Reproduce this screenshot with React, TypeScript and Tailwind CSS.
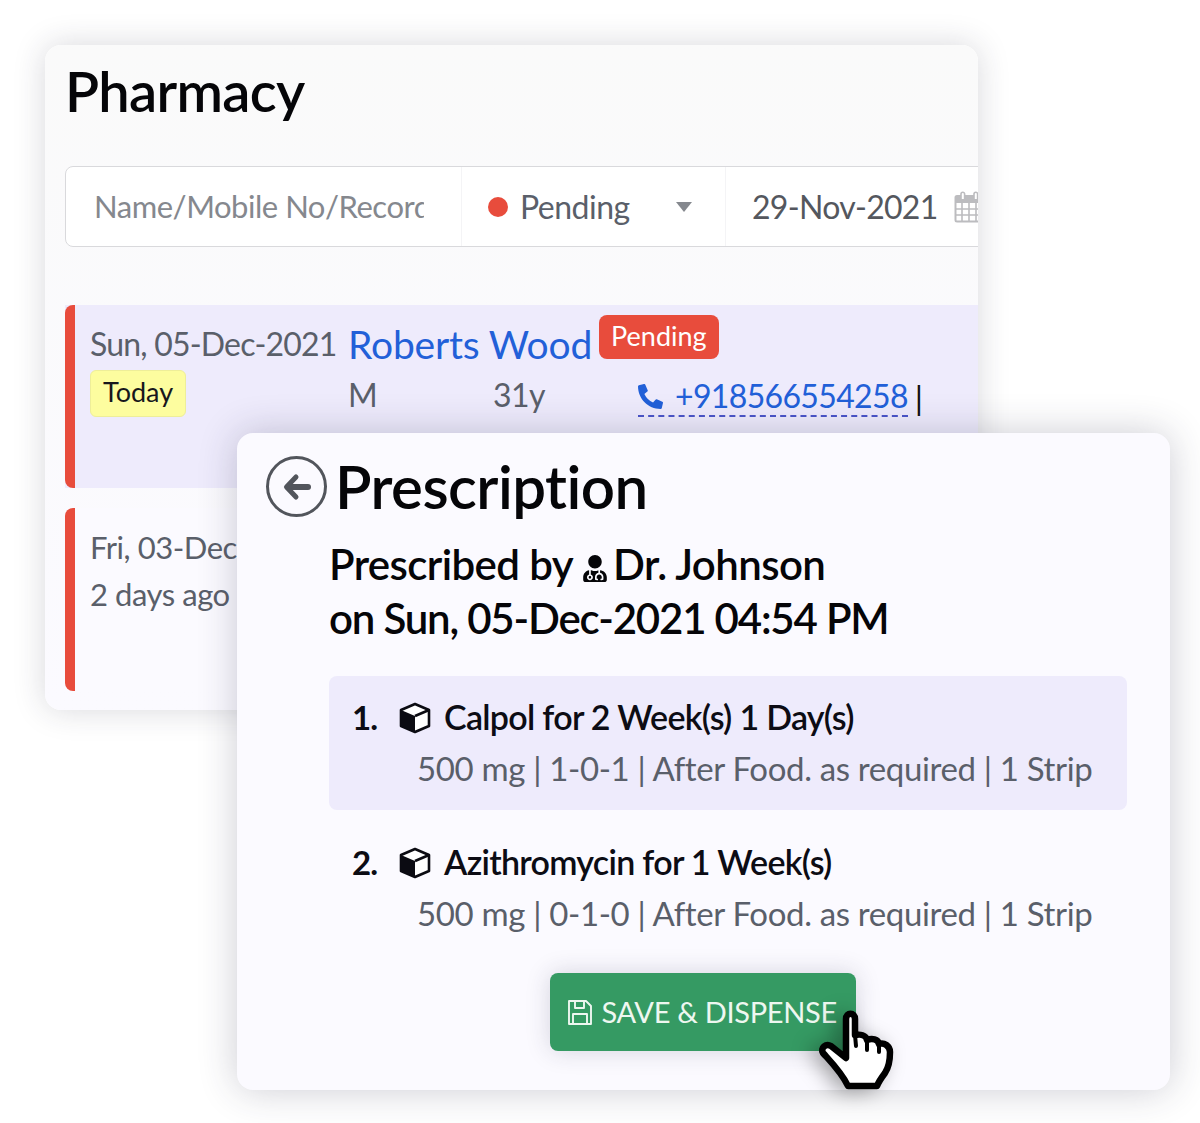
import React from "react";
import { FaPhoneAlt, FaUserMd } from "react-icons/fa";

function Cube() {
  return (
    <svg viewBox="0 0 32 32" className="w-[32px] h-[32px] shrink-0">
      <path d="M16 2 L30 8 V24 L16 30 L2 24 V8 Z" fill="#fff" stroke="#0b0b12" strokeWidth="2.6" strokeLinejoin="round" />
      <path d="M2 8 L16 14 V30 L2 24 Z" fill="#0b0b12" />
      <path d="M16 14 L30 8" stroke="#0b0b12" strokeWidth="2.6" />
    </svg>
  );
}

function Hand() {
  return (
    <svg viewBox="0 0 90 92" className="absolute left-[810px] top-[1005px] w-[90px] h-[92px] drop-shadow-[-8px_2px_10px_rgba(0,0,0,0.35)]">
      <path
        d="M36 14 C36 7 45 7 45 14 L45 30 C50 29 56 30 57 35 C62 33 68 34 69 39 C74 37 80 41 80 47 C80 55 79 62 75 68 C72 72 69 76 67 81 L38 81 C32 68 22 58 13 48 C10 43 16 38 21 41 L36 53 Z"
        fill="#fff"
        stroke="#000"
        strokeWidth="6.5"
        strokeLinejoin="round"
      />
      <path d="M45 30 L46 41 M57 35 L57 45 M69 39 L69 47" stroke="#000" strokeWidth="4" strokeLinecap="round" fill="none" />
    </svg>
  );
}

function Calendar() {
  return (
    <svg viewBox="0 0 30 32" className="ml-[16px] w-[30px] h-[32px] shrink-0">
      <rect x="1.5" y="5" width="27" height="25.5" rx="1.5" fill="#fff" stroke="#bcbcbf" strokeWidth="2" />
      <rect x="1" y="5" width="28" height="7" fill="#bcbcbf" />
      <path d="M8 12 V30 M15 12 V30 M22 12 V30 M2 18 H28 M2 24 H28" stroke="#bcbcbf" strokeWidth="1.6" />
      <path d="M7 8 V3 A1.8 1.8 0 0 1 10.6 3 V8 M20 8 V3 A1.8 1.8 0 0 1 23.6 3 V8" stroke="#bcbcbf" strokeWidth="1.6" fill="#fff" />
    </svg>
  );
}

function BackArrow() {
  return (
    <svg viewBox="0 0 28 28" className="w-[28px] h-[28px]">
      <path d="M25 14 H6" stroke="#52555c" strokeWidth="6" strokeLinecap="round" />
      <path d="M13 4 L3.5 14 L13 24" stroke="#52555c" strokeWidth="5" strokeLinecap="round" strokeLinejoin="round" fill="none" />
    </svg>
  );
}

function SaveIcon() {
  return (
    <svg viewBox="0 0 24 25" className="w-[24px] h-[25px] mr-[10px] shrink-0" fill="none" stroke="#eef7f0" strokeWidth="1.9" strokeLinejoin="round">
      <path d="M1 1 H18 L23 6 V24 H1 Z" />
      <path d="M7 1 V8 H16 V1" />
      <path d="M5 24 V14 H19 V24" />
    </svg>
  );
}

function Item({ n, name, sub, active }: { n: string; name: string; sub: string; active?: boolean }) {
  return (
    <div className={"h-[134px] rounded-lg pl-[23px] pt-[19px] " + (active ? "bg-[#eeebfc]" : "")}>
      <div className="flex items-center h-[42px]">
        <span className="w-[47px] pt-[4px] text-[33px] font-bold text-[#0c0c14] tracking-[-1px]">{n}</span>
        <span className="pt-[3px]">
          <Cube />
        </span>
        <span className="ml-[13px] text-[34px] font-semibold text-[#0c0c14] tracking-[-0.7px] whitespace-nowrap">{name}</span>
      </div>
      <div className="ml-[65px] mt-[10px] text-[33px] leading-[42px] text-[#5a5f6a] tracking-[-0.35px] whitespace-nowrap">{sub}</div>
    </div>
  );
}

function Row({ active, children }: { active?: boolean; children: React.ReactNode }) {
  return (
    <div className={"flex h-[183px] " + (active ? "bg-[#eeebfc]" : "bg-[#fbfaff]")}>
      <div className="w-[10px] shrink-0 bg-[#e84c3c] rounded-l-lg" />
      <div className="flex-1 min-w-0">{children}</div>
    </div>
  );
}

export default function App() {
  return (
    <div className="relative h-[1123px] w-[1200px] bg-white overflow-hidden font-['Lato',sans-serif]">
      <div className="absolute left-[45px] top-[45px] w-[933px] h-[665px] rounded-2xl bg-gradient-to-b from-[#fafafa] to-[#fbfaff] shadow-[0_0_32px_rgba(40,40,60,0.18)] overflow-hidden pl-[20px]">
        <h1 className="pt-[12px] h-[121px] text-[56px] leading-[68px] font-semibold text-[#050508] tracking-[-0.7px]">Pharmacy</h1>
        <div className="flex h-[81px] w-[1000px] bg-white border border-[#d9d9dc] rounded-l-lg items-center">
          <div className="w-[395px] pl-[28px] h-full flex items-center shrink-0">
            <span className="w-[330px] overflow-hidden whitespace-nowrap text-[31px] tracking-[-0.47px] text-[#85888e]">Name/Mobile No/Record No</span>
          </div>
          <div className="w-[264px] h-full flex items-center pl-[26px] border-l border-[#f4f4f6] shrink-0">
            <span className="w-[20px] h-[20px] rounded-full bg-[#e84c3c]" />
            <span className="ml-[12px] w-[156px] text-[32px] tracking-[-0.5px] text-[#5a5f6a]">Pending</span>
            <span className="w-0 h-0 border-x-[8px] border-x-transparent border-t-[10px] border-t-[#85888e]" />
          </div>
          <div className="h-full flex items-center pl-[26px] border-l border-[#f4f4f6] shrink-0">
            <span className="text-[32px] tracking-[-0.7px] text-[#54575e] whitespace-nowrap">29-Nov-2021</span>
            <Calendar />
          </div>
        </div>
        <div className="mt-[58px] flex flex-col gap-[20px]">
          <Row active>
            <div className="flex pl-[15px] pt-[21px]">
              <div className="w-[258px] shrink-0">
                <div className="text-[32px] leading-[36px] text-[#5a5f6a] whitespace-nowrap tracking-[-0.8px]">Sun, 05-Dec-2021</div>
                <span className="mt-[8px] inline-block bg-[#fdfd9f] border border-[#eeee99] rounded-md px-[12px] h-[47px] leading-[42px] text-[27px] text-[#17171c]">Today</span>
              </div>
              <div className="flex-1">
                <div className="flex">
                  <span className="text-[39px] leading-[36px] text-[#2260d8] whitespace-nowrap tracking-[-0.2px]">Roberts Wood</span>
                  <span className="ml-[7px] -mt-[11px] h-[44px] px-[12px] rounded-lg bg-[#e84c3c] text-white text-[27px] leading-[42px]">Pending</span>
                </div>
                <div className="mt-[13px] flex items-start h-[40px] text-[32px] leading-[40px] text-[#5a5f6a]">
                  <span className="w-[145px]">M</span>
                  <span className="w-[145px] tracking-[-0.6px]">31y</span>
                  <span className="flex items-center border-b-2 border-dashed border-[#4a55c8] mt-[2px] h-[40px] text-[#2260d8] text-[32px] tracking-[-0.65px]">
                    <FaPhoneAlt className="w-[25px] h-[25px] mr-[12px]" />
                    +918566554258
                  </span>
                  <span className="ml-[7px] mt-[2px] text-[#111] text-[33px]">|</span>
                </div>
              </div>
            </div>
          </Row>
          <Row>
            <div className="pl-[15px] pt-[16px] text-[31px] leading-[47px] text-[#5a5f6a] whitespace-nowrap tracking-[-0.45px]">
              <div>Fri, 03-Dec-2021</div>
              <div>2 days ago</div>
            </div>
          </Row>
        </div>
      </div>

      <div className="absolute left-[237px] top-[433px] w-[933px] h-[657px] rounded-2xl bg-[#fbfaff] shadow-[0_0_38px_rgba(40,40,70,0.24)]">
        <div className="flex items-center pl-[29px] pt-[23px]">
          <span className="w-[61px] h-[61px] rounded-full border-[3px] border-[#52555c] flex items-center justify-center shrink-0">
            <BackArrow />
          </span>
          <h2 className="ml-[8px] -mt-[2px] text-[60px] leading-[60px] font-semibold text-[#050508] tracking-[-0.55px]">Prescription</h2>
        </div>
        <div className="ml-[92px] mt-[20px] text-[42px] leading-[54px] font-semibold text-[#050508] tracking-[-1.2px] whitespace-nowrap">
          <div className="flex items-center tracking-[-0.6px]">
            Prescribed by
            <FaUserMd className="ml-[10px] mr-[6px] w-[24px] h-[27px] mt-[8px]" />
            Dr. Johnson
          </div>
          <div>on Sun, 05-Dec-2021 04:54 PM</div>
        </div>
        <div className="ml-[92px] mr-[43px] mt-[31px] flex flex-col gap-[11px]">
          <Item active n="1." name="Calpol for 2 Week(s) 1 Day(s)" sub="500 mg | 1-0-1 | After Food. as required | 1 Strip" />
          <Item n="2." name="Azithromycin for 1 Week(s)" sub="500 mg | 0-1-0 | After Food. as required | 1 Strip" />
        </div>
        <div className="flex justify-center pr-[2px] mt-[18px]">
          <button className="flex items-center w-[306px] h-[78px] pl-[18px] rounded-lg bg-[#359a63] text-[#eef7f0] text-[29px] tracking-[-0.3px] shadow-[0_0_24px_rgba(40,40,70,0.18)] whitespace-nowrap">
            <SaveIcon />
            SAVE &amp; DISPENSE
          </button>
        </div>
      </div>
      <Hand />
    </div>
  );
}
